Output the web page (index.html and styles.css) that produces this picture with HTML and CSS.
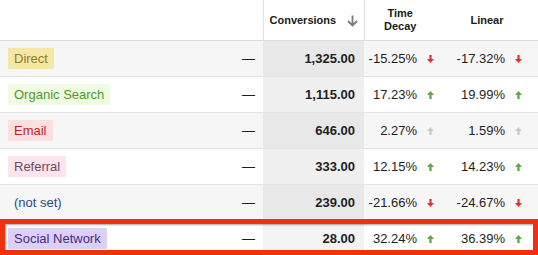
FILE: index.html
```html
<!DOCTYPE html>
<html>
<head>
<meta charset="utf-8">
<link rel="stylesheet" href="styles.css">
</head>
<body>
<svg width="0" height="0" class="defs">
  <defs>
    <path id="up" d="M3.5 0 L7 4 H4.6 V8 H2.4 V4 H0 Z"/>
    <path id="down" d="M3.5 8 L7 4 H4.6 V0 H2.4 V4 H0 Z"/>
  </defs>
</svg>
<div class="wrap">
<table class="report">
  <colgroup>
    <col class="c1"><col class="c2"><col class="c3"><col class="c4">
  </colgroup>
  <thead>
    <tr>
      <th class="h-dim"></th>
      <th class="h-conv"><span class="h-conv-inner"><span>Conversions</span>
        <svg class="sort" width="11" height="12" viewBox="0 0 11 12"><path d="M5.5 0.5 V10.5 M1 6 L5.5 10.5 L10 6" fill="none" stroke="#7a7a7a" stroke-width="1.8"/></svg></span></th>
      <th class="h-metric">Time<br>Decay</th>
      <th class="h-metric">Linear</th>
    </tr>
  </thead>
  <tbody>
    <tr class="alt">
      <td class="dim"><div class="dim-inner"><span class="badge direct">Direct</span><span class="dash">—</span></div></td>
      <td class="conv">1,325.00</td>
      <td class="val"><span>-15.25%</span><svg class="ar down"><use href="#down"/></svg></td>
      <td class="val"><span>-17.32%</span><svg class="ar down"><use href="#down"/></svg></td>
    </tr>
    <tr>
      <td class="dim"><div class="dim-inner"><span class="badge organic">Organic Search</span><span class="dash">—</span></div></td>
      <td class="conv">1,115.00</td>
      <td class="val"><span>17.23%</span><svg class="ar up"><use href="#up"/></svg></td>
      <td class="val"><span>19.99%</span><svg class="ar up"><use href="#up"/></svg></td>
    </tr>
    <tr class="alt">
      <td class="dim"><div class="dim-inner"><span class="badge email">Email</span><span class="dash">—</span></div></td>
      <td class="conv">646.00</td>
      <td class="val"><span>2.27%</span><svg class="ar flat"><use href="#up"/></svg></td>
      <td class="val"><span>1.59%</span><svg class="ar flat"><use href="#up"/></svg></td>
    </tr>
    <tr>
      <td class="dim"><div class="dim-inner"><span class="badge referral">Referral</span><span class="dash">—</span></div></td>
      <td class="conv">333.00</td>
      <td class="val"><span>12.15%</span><svg class="ar up"><use href="#up"/></svg></td>
      <td class="val"><span>14.23%</span><svg class="ar up"><use href="#up"/></svg></td>
    </tr>
    <tr class="alt">
      <td class="dim"><div class="dim-inner"><span class="badge notset">(not set)</span><span class="dash">—</span></div></td>
      <td class="conv">239.00</td>
      <td class="val"><span>-21.66%</span><svg class="ar down"><use href="#down"/></svg></td>
      <td class="val"><span>-24.67%</span><svg class="ar down"><use href="#down"/></svg></td>
    </tr>
    <tr class="social">
      <td class="dim"><div class="dim-inner"><span class="badge socialnet">Social Network</span><span class="dash">—</span></div></td>
      <td class="conv">28.00</td>
      <td class="val"><span>32.24%</span><svg class="ar up"><use href="#up"/></svg></td>
      <td class="val"><span>36.39%</span><svg class="ar up"><use href="#up"/></svg></td>
    </tr>
  </tbody>
</table>
<div class="highlight"></div>
</div>
</body>
</html>
```

FILE: styles.css
```css
html, body {
  margin: 0;
  padding: 0;
  background: #fff;
}
body {
  font-family: "Liberation Sans", Arial, sans-serif;
  font-size: 13px;
  color: #1e1e1e;
  overflow: hidden;
}
.defs { position: absolute; }
.wrap {
  position: relative;
  width: 538px;
  height: 255px;
  overflow: hidden;
}
.report {
  border-collapse: collapse;
  table-layout: fixed;
  width: 538px;
}
.c1 { width: 263px; }
.c2 { width: 101px; }
.c3 { width: 86px; }
.c4 { width: 88px; }

thead th {
  height: 40px;
  padding: 0;
  font-size: 11px;
  font-weight: bold;
  color: #1a1a1a;
  border-bottom: 1px solid #dcdcdc;
  line-height: 13px;
  vertical-align: middle;
}
.h-dim { border-right: 1px solid #e2e2e2; }
.h-conv {
  border-right: 1px solid #e2e2e2;
  padding: 0 6px 0 6px;
}
.h-conv-inner {
  display: flex;
  align-items: center;
  justify-content: space-between;
}
.sort { display: block; margin-top: 1px; }
.h-metric {
  text-align: center;
  padding-right: 14px;
}

tbody td {
  height: 35px;
  padding: 0;
  border-bottom: 1px solid #e4e4e4;
  vertical-align: middle;
  white-space: nowrap;
}
tbody tr.alt td { background: #f6f6f6; }
tbody td.conv {
  background: #f0f0f0;
  text-align: right;
  font-weight: bold;
  padding-right: 9px;
}
tbody tr.alt td.conv { background: #e8e8e8; }
tbody tr.social td.conv { background: #f3f3f3; }

td.dim { padding: 0 8px; }
.dim-inner {
  display: flex;
  align-items: center;
  justify-content: space-between;
}
.badge {
  display: inline-block;
  height: 21px;
  line-height: 21px;
  padding: 0 6px;
  border-radius: 1px;
}
.direct { background: #f5e7a6; color: #8d7c1e; }
.organic { background: #effbe2; color: #4f9a2a; }
.email { background: #fbe0df; color: #c4241e; }
.referral { background: #fce4ec; color: #6b4b58; }
.notset { background: transparent; color: #2c4a82; }
.socialnet { background: #ddd0f6; color: #472a86; }
.dash { color: #1e1e1e; }

td.val {
  text-align: right;
  padding-right: 16px;
}
.val span { vertical-align: middle; }
.ar {
  width: 7px;
  height: 8px;
  margin-left: 10px;
  vertical-align: middle;
}
.up { fill: #58a93c; }
.down { fill: #e2302a; }
.flat { fill: #c9c9c9; }

.highlight {
  position: absolute;
  left: 0;
  top: 219px;
  width: 538px;
  height: 36px;
  box-sizing: border-box;
  border: 5px solid #f0300f;
  box-shadow: inset 1px 1px 2px rgba(0,0,0,0.35);
  pointer-events: none;
}
```
